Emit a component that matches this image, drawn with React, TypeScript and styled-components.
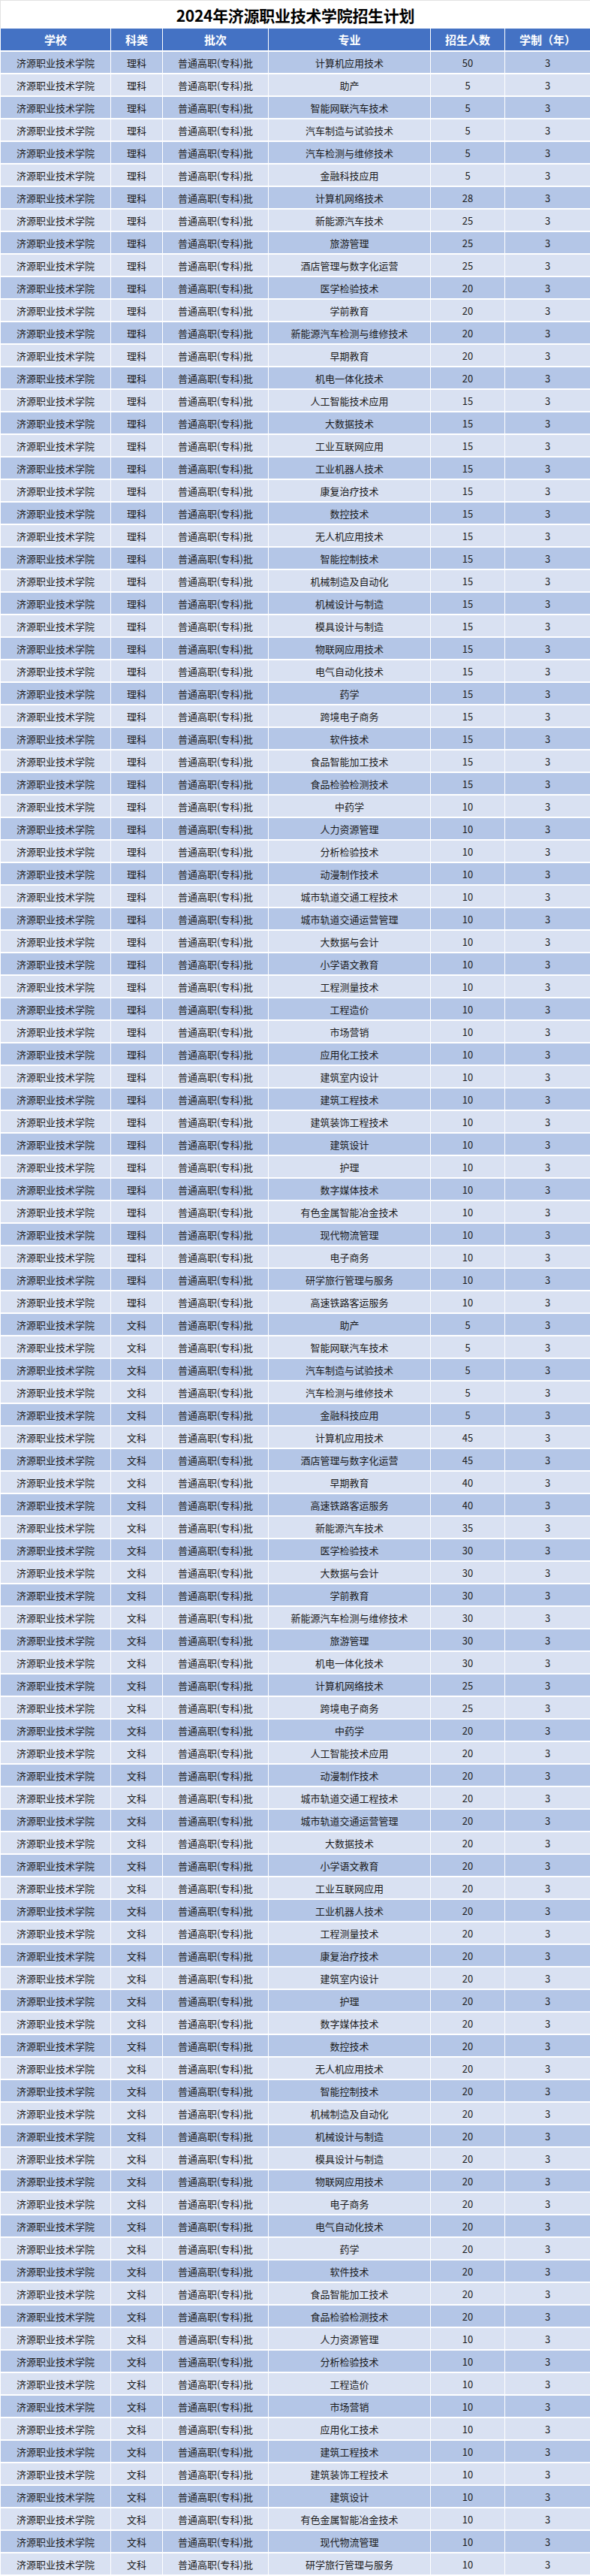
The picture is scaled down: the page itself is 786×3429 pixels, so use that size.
import { FC } from 'react'
import styled, { createGlobalStyle } from 'styled-components'

type planRow = {
  subject: string
  major: string
  count: number
}

const SCHOOL = '济源职业技术学院'
const BATCH = '普通高职(专科)批'

const sciRows: [string, number][] = [
  ['计算机应用技术', 50], ['助产', 5], ['智能网联汽车技术', 5], ['汽车制造与试验技术', 5],
  ['汽车检测与维修技术', 5], ['金融科技应用', 5], ['计算机网络技术', 28], ['新能源汽车技术', 25],
  ['旅游管理', 25], ['酒店管理与数字化运营', 25], ['医学检验技术', 20], ['学前教育', 20],
  ['新能源汽车检测与维修技术', 20], ['早期教育', 20], ['机电一体化技术', 20], ['人工智能技术应用', 15],
  ['大数据技术', 15], ['工业互联网应用', 15], ['工业机器人技术', 15], ['康复治疗技术', 15],
  ['数控技术', 15], ['无人机应用技术', 15], ['智能控制技术', 15], ['机械制造及自动化', 15],
  ['机械设计与制造', 15], ['模具设计与制造', 15], ['物联网应用技术', 15], ['电气自动化技术', 15],
  ['药学', 15], ['跨境电子商务', 15], ['软件技术', 15], ['食品智能加工技术', 15],
  ['食品检验检测技术', 15], ['中药学', 10], ['人力资源管理', 10], ['分析检验技术', 10],
  ['动漫制作技术', 10], ['城市轨道交通工程技术', 10], ['城市轨道交通运营管理', 10], ['大数据与会计', 10],
  ['小学语文教育', 10], ['工程测量技术', 10], ['工程造价', 10], ['市场营销', 10],
  ['应用化工技术', 10], ['建筑室内设计', 10], ['建筑工程技术', 10], ['建筑装饰工程技术', 10],
  ['建筑设计', 10], ['护理', 10], ['数字媒体技术', 10], ['有色金属智能冶金技术', 10],
  ['现代物流管理', 10], ['电子商务', 10], ['研学旅行管理与服务', 10], ['高速铁路客运服务', 10],
]

const artRows: [string, number][] = [
  ['助产', 5], ['智能网联汽车技术', 5], ['汽车制造与试验技术', 5], ['汽车检测与维修技术', 5],
  ['金融科技应用', 5], ['计算机应用技术', 45], ['酒店管理与数字化运营', 45], ['早期教育', 40],
  ['高速铁路客运服务', 40], ['新能源汽车技术', 35], ['医学检验技术', 30], ['大数据与会计', 30],
  ['学前教育', 30], ['新能源汽车检测与维修技术', 30], ['旅游管理', 30], ['机电一体化技术', 30],
  ['计算机网络技术', 25], ['跨境电子商务', 25], ['中药学', 20], ['人工智能技术应用', 20],
  ['动漫制作技术', 20], ['城市轨道交通工程技术', 20], ['城市轨道交通运营管理', 20], ['大数据技术', 20],
  ['小学语文教育', 20], ['工业互联网应用', 20], ['工业机器人技术', 20], ['工程测量技术', 20],
  ['康复治疗技术', 20], ['建筑室内设计', 20], ['护理', 20], ['数字媒体技术', 20],
  ['数控技术', 20], ['无人机应用技术', 20], ['智能控制技术', 20], ['机械制造及自动化', 20],
  ['机械设计与制造', 20], ['模具设计与制造', 20], ['物联网应用技术', 20], ['电子商务', 20],
  ['电气自动化技术', 20], ['药学', 20], ['软件技术', 20], ['食品智能加工技术', 20],
  ['食品检验检测技术', 20], ['人力资源管理', 10], ['分析检验技术', 10], ['工程造价', 10],
  ['市场营销', 10], ['应用化工技术', 10], ['建筑工程技术', 10], ['建筑装饰工程技术', 10],
  ['建筑设计', 10], ['有色金属智能冶金技术', 10], ['现代物流管理', 10], ['研学旅行管理与服务', 10],
]

const rows: planRow[] = [
  ...sciRows.map(([major, count]) => ({ subject: '理科', major, count })),
  ...artRows.map(([major, count]) => ({ subject: '文科', major, count })),
]

const headers = ['学校', '科类', '批次', '专业', '招生人数', '学制（年）']

const GlobalStyle = createGlobalStyle`
  html, body {
    margin: 0;
    padding: 0;
    background: #ffffff;
  }
  body {
    font-family: "Noto Sans CJK SC", "Noto Sans", sans-serif;
  }
`

export default function App() {
  return (
    <>
      <GlobalStyle />
      <SPage>
        <STitle>2024年济源职业技术学院招生计划</STitle>
        <SSheet>
          <SHeaderRow>
            {headers.map((h) => (
              <SHeadCell key={h}>{h}</SHeadCell>
            ))}
          </SHeaderRow>
          {rows.map((row, i) => (
            <PlanRow key={i} row={row} dark={i % 2 === 0} />
          ))}
        </SSheet>
      </SPage>
    </>
  )
}

const PlanRow: FC<{ row: planRow; dark: boolean }> = ({ row, dark }) => {
  return (
    <SDataRow>
      <SCell $dark={dark}>{SCHOOL}</SCell>
      <SCell $dark={dark}>{row.subject}</SCell>
      <SCell $dark={dark}>{BATCH}</SCell>
      <SCell $dark={dark}>{row.major}</SCell>
      <SCell $dark={dark}>{row.count}</SCell>
      <SCell $dark={dark}>3</SCell>
    </SDataRow>
  )
}

const COLUMNS = '146px 68px 140px 215px 98px 1fr'

const SPage = styled.div`
  width: 786px;
  display: flex;
  flex-direction: column;
`

const STitle = styled.div`
  height: 38px;
  display: flex;
  align-items: center;
  justify-content: center;
  border-top: 1px solid #e3e3e3;
  border-left: 1px solid #e3e3e3;
  box-sizing: border-box;
  font-size: 21px;
  font-weight: 700;
  color: #000000;
  letter-spacing: -0.3px;
`

const SSheet = styled.div`
  display: flex;
  flex-direction: column;
  gap: 2px;
  padding-left: 1px;
`

const SHeaderRow = styled.div`
  display: grid;
  grid-template-columns: ${COLUMNS};
  column-gap: 1px;
  height: 29px;
`

const SHeadCell = styled.div`
  background: #4472c4;
  color: #ffffff;
  font-size: 15px;
  font-weight: 700;
  display: flex;
  align-items: center;
  justify-content: center;
  white-space: nowrap;
`

const SDataRow = styled.div`
  display: grid;
  grid-template-columns: ${COLUMNS};
  column-gap: 1px;
  height: 28px;
`

const SCell = styled.div<{ $dark: boolean }>`
  background: ${(p) => (p.$dark ? '#b4c6e7' : '#d9e1f2')};
  color: #1a1a1a;
  font-size: 13px;
  display: flex;
  align-items: center;
  justify-content: center;
  white-space: nowrap;
  overflow: hidden;
`
